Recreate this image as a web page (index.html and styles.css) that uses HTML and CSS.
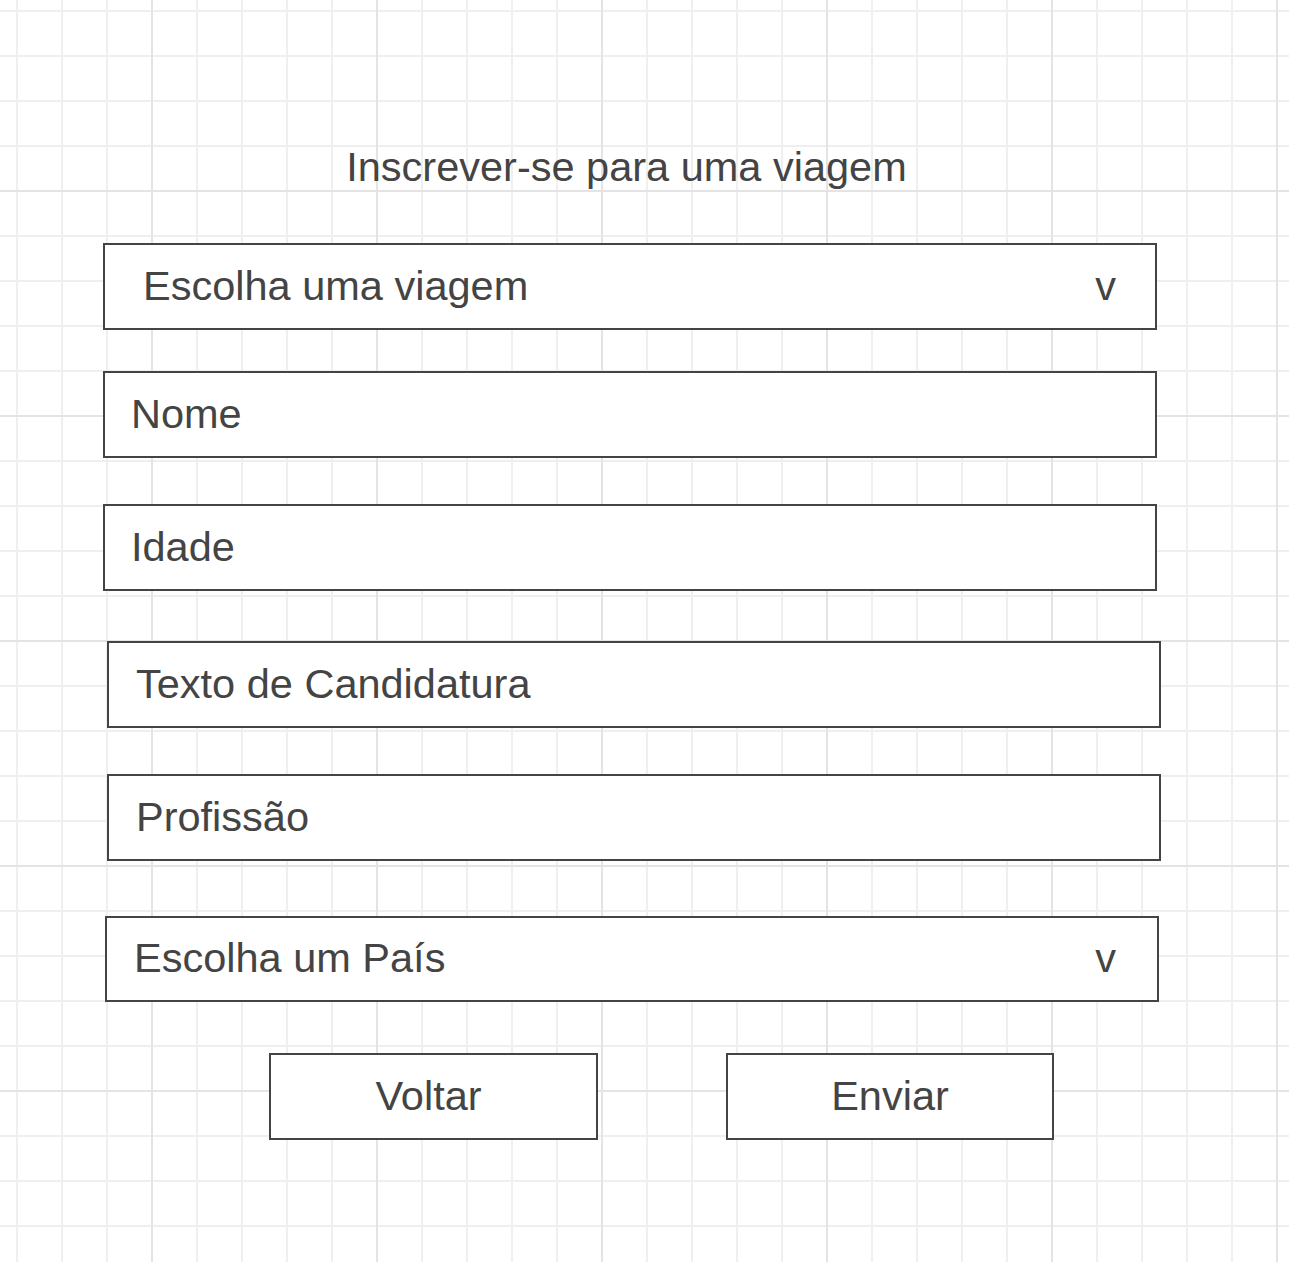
FILE: index.html
```html
<!DOCTYPE html>
<html lang="pt">
<head>
<meta charset="utf-8">
<title>Inscrever-se para uma viagem</title>
<link rel="stylesheet" href="styles.css">
</head>
<body>
<main class="form">
  <h1 class="title">Inscrever-se para uma viagem</h1>
  <div class="field select trip"><span>Escolha uma viagem</span><span class="caret">v</span></div>
  <div class="field name">Nome</div>
  <div class="field age">Idade</div>
  <div class="field letter">Texto de Candidatura</div>
  <div class="field job">Profissão</div>
  <div class="field select country"><span>Escolha um País</span><span class="caret">v</span></div>
  <div class="actions">
    <div class="btn back">Voltar</div>
    <div class="btn send">Enviar</div>
  </div>
</main>
</body>
</html>
```

FILE: styles.css
```css
html, body {
  margin: 0;
  padding: 0;
}

body {
  min-height: 1262px;
  background-color: #ffffff;
  background-image:
    linear-gradient(to right, #e4e4e4 2px, transparent 2px),
    linear-gradient(to bottom, #e4e4e4 2px, transparent 2px),
    linear-gradient(to right, #efefef 2px, transparent 2px),
    linear-gradient(to bottom, #efefef 2px, transparent 2px);
  background-size: 225px 225px, 225px 225px, 45px 45px, 45px 45px;
  background-position: 151px 0, 0 190px, 16px 0, 0 10px;
  font-family: "Liberation Sans", Arial, sans-serif;
  color: #444444;
  overflow: hidden;
}

.form {
  display: flex;
  flex-direction: column;
  align-items: flex-start;
  padding-top: 144px;
}

.title {
  margin: 0;
  align-self: stretch;
  padding-right: 36px;
  font-size: 41.5px;
  font-weight: normal;
  line-height: 46px;
  height: 46px;
  text-align: center;
}

.field {
  box-sizing: border-box;
  width: 1054px;
  height: 87px;
  border: 2px solid #444444;
  background: #ffffff;
  display: flex;
  align-items: center;
  justify-content: space-between;
  padding: 0 40px 2px 27px;
  font-size: 41.5px;
  line-height: 46px;
  white-space: nowrap;
}

.trip {
  margin: 53px 0 0 103px;
  padding-left: 38px;
  padding-right: 39px;
}

.name {
  margin: 41px 0 0 103px;
  padding-left: 26px;
}

.age {
  margin: 46px 0 0 103px;
  padding-left: 26px;
}

.letter {
  margin: 50px 0 0 107px;
}

.job {
  margin: 46px 0 0 107px;
}

.country {
  margin: 55px 0 0 105px;
  height: 86px;
  padding-right: 41px;
}

.actions {
  display: flex;
  gap: 128px;
  margin: 51px 0 0 269px;
}

.btn {
  box-sizing: border-box;
  height: 87px;
  border: 2px solid #444444;
  background: #ffffff;
  display: flex;
  align-items: center;
  justify-content: center;
  padding-bottom: 2px;
  font-size: 41.5px;
  line-height: 46px;
}

.back {
  width: 329px;
  padding-right: 10px;
}

.send {
  width: 328px;
}
```
